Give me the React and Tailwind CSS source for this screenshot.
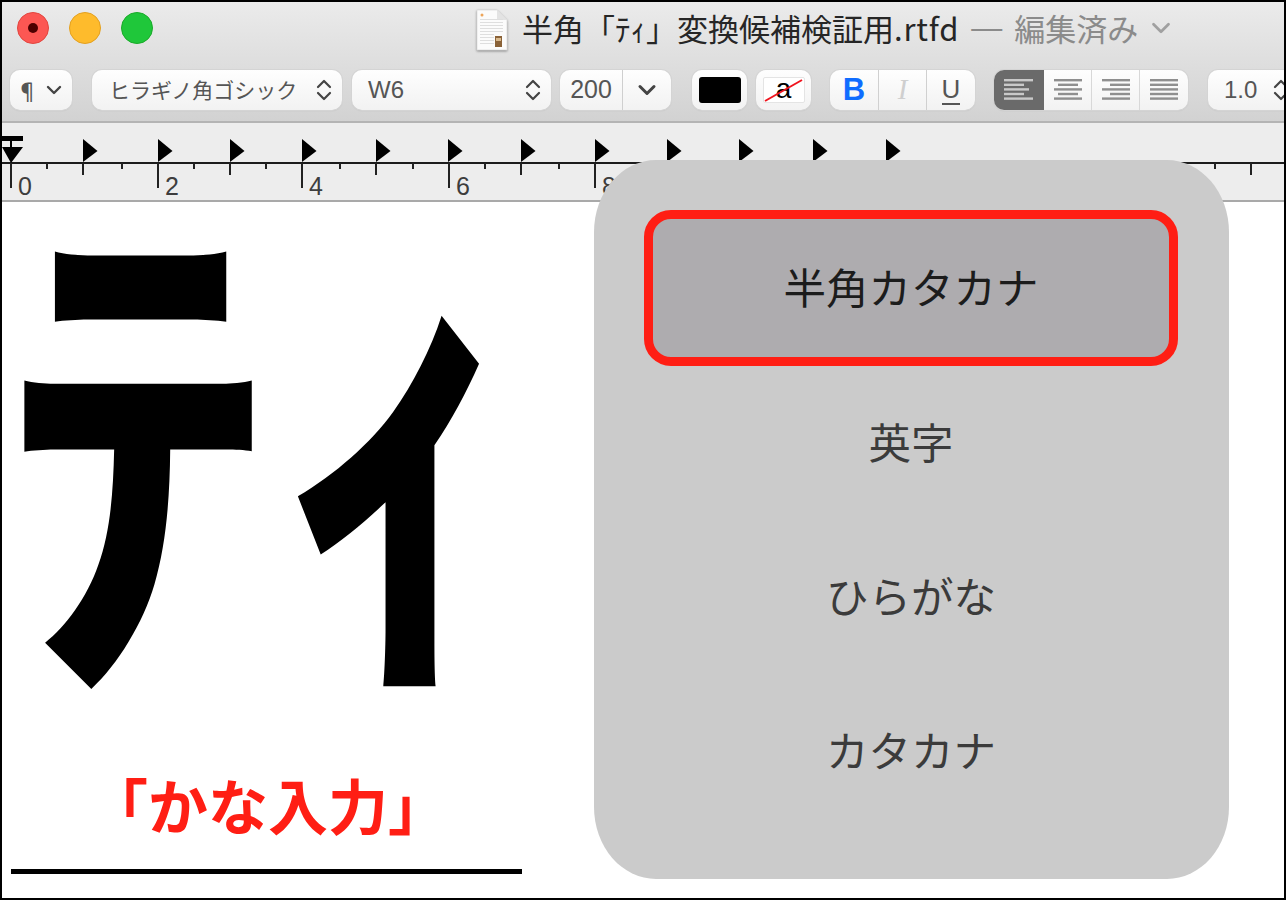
import { ChevronDown } from "lucide-react";

const JP = "font-['Noto_Sans_CJK_JP','Liberation_Sans',sans-serif]";
const btn =
  "flex items-center rounded-[10px] bg-gradient-to-b from-[#fefefe] to-[#f2f2f2] shadow-[0_0_0_1px_#d4d4d4,0_1px_1px_#a8a8a8]";

const MAJOR = [[11, "0"], [158, "2"], [302, "4"], [449, "6"], [595, "8"]];
const HALF = [83, 230, 376, 521, 1251];
const MINOR = [47, 122, 194, 266, 340, 413, 485, 559, 1215];
const TABS = [83, 158, 230, 302, 376, 448, 521, 595, 667, 739, 813, 886];

function UpDown({ size = 24 }) {
  return <svg width={size} height={size} viewBox="0 0 24 24" fill="none" stroke="#444" strokeWidth="2.2" strokeLinecap="round" strokeLinejoin="round"><path d="M6 9l6-6 6 6M6 15l6 6 6-6" /></svg>;
}

function AlignIcon({ rows, color = "#8f8f8f" }) {
  return (
    <svg width="30" height="24" viewBox="0 0 30 24" fill={color}>
      {rows.map(([x, w], i) => <rect key={i} x={x} y={1 + i * 4.6} width={w} height="2.4" />)}
    </svg>
  );
}

function DocIcon() {
  return (
    <svg width="32" height="42" viewBox="0 0 32 42" className="drop-shadow-[0_1px_1px_rgba(0,0,0,0.4)]">
      <path d="M1 1h20l10 10v30H1z" fill="#fbfbfb" stroke="#d8d8d8" strokeWidth="0.7" />
      <path d="M21 1v10h10z" fill="#e3e3e3" />
      <circle cx="6" cy="6" r="1.5" fill="#eda55a" />
      {[10, 13, 16, 19, 22, 25, 28, 31, 34].map((y) => <rect key={y} x="4" y={y} width={y < 24 ? 23 : 14} height="1" fill="#dedede" />)}
      <rect x="19" y="27" width="7" height="11" fill="#8a6238" />
      <rect x="20" y="29" width="5" height="3" fill="#d9b98c" />
    </svg>
  );
}

function Ruler() {
  return (
    <svg width="1282" height="79" viewBox="2 123 1282 79" className="block">
      <rect x="2" y="162" width="1282" height="2" fill="#1c1c1c" />
      {MAJOR.map(([x, n]) => (
        <g key={x}>
          <rect x={x - 1} y="163" width="2" height="25" fill="#222" />
          <text x={x + 7} y="195" fontSize="25" fill="#3d3d3d" fontFamily="Liberation Sans">{n}</text>
        </g>
      ))}
      {HALF.map((x) => <rect key={x} x={x - 1} y="163" width="2" height="12" fill="#222" />)}
      {MINOR.map((x) => <rect key={x} x={x - 1} y="163" width="2" height="6" fill="#222" />)}
      {TABS.map((x) => <polygon key={x} points={`${x},139 ${x},162 ${x + 14.5},151`} fill="#000" />)}
      <rect x="2" y="136" width="21" height="5" fill="#000" />
      <rect x="10" y="141" width="2" height="8" fill="#000" />
      <polygon points="2,147 23,147 11,163" fill="#000" />
    </svg>
  );
}

function ModeRow({ label, selected }) {
  if (selected) {
    return (
      <div className="flex h-[156px] items-center justify-center rounded-[27px] border-[9px] border-[#ff1e14] bg-[#aeacaf] pb-[4px] text-[#1c1c1c]">
        {label}
      </div>
    );
  }
  return <div className="flex h-[154px] items-center justify-center pb-[4px] text-[#3b3b3b]">{label}</div>;
}

export default function App() {
  return (
    <div className={`relative flex h-[900px] w-[1286px] flex-col overflow-hidden border-2 border-black bg-white ${JP}`}>
      {/* titlebar + toolbar */}
      <div className="h-[121px] shrink-0 border-b-2 border-[#b4b4b4] bg-gradient-to-b from-[#ebebeb] to-[#d2d2d2]">
        <div className="flex h-[68px] items-start">
          <div className="ml-[15px] mt-[10px] flex gap-[20px]">
            <div className="flex h-[32px] w-[32px] items-center justify-center rounded-full border border-[#e2463f] bg-[#fc5753]">
              <div className="h-[10px] w-[10px] rounded-full bg-[#4d0000]" />
            </div>
            <div className="h-[32px] w-[32px] rounded-full border border-[#e3a020] bg-[#febb2c]" />
            <div className="h-[32px] w-[32px] rounded-full border border-[#1aab29] bg-[#1fc73a]" />
          </div>
          <div className="ml-[323px] mt-[6px] flex items-center">
            <DocIcon />
            <div className="ml-[14px] flex h-[44px] items-center whitespace-nowrap pb-[4px] text-[31px] text-[#262626]">
              <span>半角「ﾃｨ」変換候補検証用</span>
              <span className="tracking-[0.8px]">.rtfd</span>
              <span className="ml-[12px] font-['Liberation_Sans'] text-[#8b8b8b]">—</span>
              <span className="ml-[12px] text-[#8b8b8b]">編集済み</span>
              <ChevronDown size={30} color="#a0a0a0" strokeWidth={2.2} className="ml-[8px]" />
            </div>
          </div>
        </div>

        <div className="ml-[8px] flex h-[40px] w-[1400px] items-stretch text-[#555]">
          <div className={`${btn} w-[62px] justify-center gap-[3px] text-[23px]`}>
            <span>¶</span>
            <ChevronDown size={24} strokeWidth={2.4} color="#444" />
          </div>
          <div className={`${btn} ml-[20px] w-[250px] justify-between pl-[17px] pr-[6px] text-[21px]`}>
            <span className="whitespace-nowrap">ヒラギノ角ゴシック</span>
            <UpDown />
          </div>
          <div className={`${btn} ml-[10px] w-[199px] justify-between pl-[16px] pr-[6px] font-['Liberation_Sans'] text-[24px]`}>
            <span>W6</span>
            <UpDown />
          </div>
          <div className={`${btn} ml-[9px] w-[111px] font-['Liberation_Sans'] text-[25px]`}>
            <span className="flex h-full w-[63px] items-center justify-center border-r border-[#cfcfcf]">200</span>
            <span className="flex flex-1 items-center justify-center"><ChevronDown size={28} strokeWidth={2.6} color="#444" /></span>
          </div>
          <div className={`${btn} ml-[21px] w-[55px] justify-center`}>
            <div className="h-[26px] w-[42px] rounded-[3px] bg-black" />
          </div>
          <div className={`${btn} ml-[9px] w-[55px] justify-center`}>
            <div className="relative flex h-[26px] w-[42px] items-center justify-center rounded-[2px] border border-[#e4e4e4] bg-white font-['Liberation_Sans'] text-[28px] leading-none text-black">
              <span className="pb-[3px]">a</span>
              <svg className="absolute inset-0" width="40" height="24" viewBox="0 0 40 24"><path d="M1 23L38 2" stroke="#f0141e" strokeWidth="2" /></svg>
            </div>
          </div>
          <div className={`${btn} ml-[19px] w-[145px]`}>
            <span className="flex h-full w-[49px] items-center justify-center border-r border-[#d0d0d0] font-['Liberation_Sans'] text-[31px] font-bold text-[#0f6cff]">B</span>
            <span className="flex h-full w-[48px] items-center justify-center border-r border-[#d0d0d0] font-['Liberation_Serif'] text-[29px] italic text-[#cfcfcf]">I</span>
            <span className="flex h-full w-[48px] flex-col items-center justify-center font-['Liberation_Sans'] text-[26px] leading-[26px] text-[#555]"><span className="border-b-2 border-[#555] pb-[1px]">U</span></span>
          </div>
          <div className={`${btn} ml-[19px] w-[194px] overflow-hidden`}>
            <span className="flex h-full w-[50px] items-center justify-center bg-[#6a6a6a]">
              <AlignIcon color="#c9c9c9" rows={[[0, 29], [0, 20], [0, 25], [0, 20], [0, 29]]} />
            </span>
            <span className="flex h-full w-[48px] items-center justify-center border-r border-[#d8d8d8]">
              <AlignIcon rows={[[1, 28], [5, 20], [1, 28], [5, 20], [1, 28]]} />
            </span>
            <span className="flex h-full w-[48px] items-center justify-center border-r border-[#d8d8d8]">
              <AlignIcon rows={[[1, 28], [9, 20], [1, 28], [9, 20], [1, 28]]} />
            </span>
            <span className="flex h-full w-[48px] items-center justify-center">
              <AlignIcon rows={[[1, 28], [1, 28], [1, 28], [1, 28], [1, 28]]} />
            </span>
          </div>
          <div className={`${btn} ml-[20px] w-[110px] gap-[12px] pl-[16px] font-['Liberation_Sans'] text-[24px]`}>
            <span>1.0</span>
            <UpDown />
          </div>
        </div>
      </div>

      {/* ruler */}
      <div className="h-[79px] shrink-0 border-b-2 border-[#a9a9a9] bg-[#ededed]">
        <Ruler />
      </div>

      {/* document */}
      <div className="flex flex-1 flex-col">
        <div className="ml-[-1px] h-[500px] whitespace-nowrap text-[544px] font-bold leading-[440px] tracking-[-5px] text-black">ﾃｨ</div>
        <div className="ml-[86px] mt-[67px] h-[70px] text-[60px] font-bold leading-[70px] text-[#ff1e14]">「かな入力」</div>
        <div className="ml-[9px] mt-[30px] h-[5px] w-[511px] bg-black" />
      </div>

      {/* overlay panel */}
      <div className="absolute left-[592px] top-[158px] flex h-[719px] w-[635px] flex-col rounded-[62px/72px] bg-[#cbcbcb] pl-[50px] pr-[51px] pt-[50px] text-[42.5px]">
        <ModeRow label="半角カタカナ" selected />
        <ModeRow label="英字" />
        <ModeRow label="ひらがな" />
        <ModeRow label="カタカナ" />
      </div>
    </div>
  );
}
